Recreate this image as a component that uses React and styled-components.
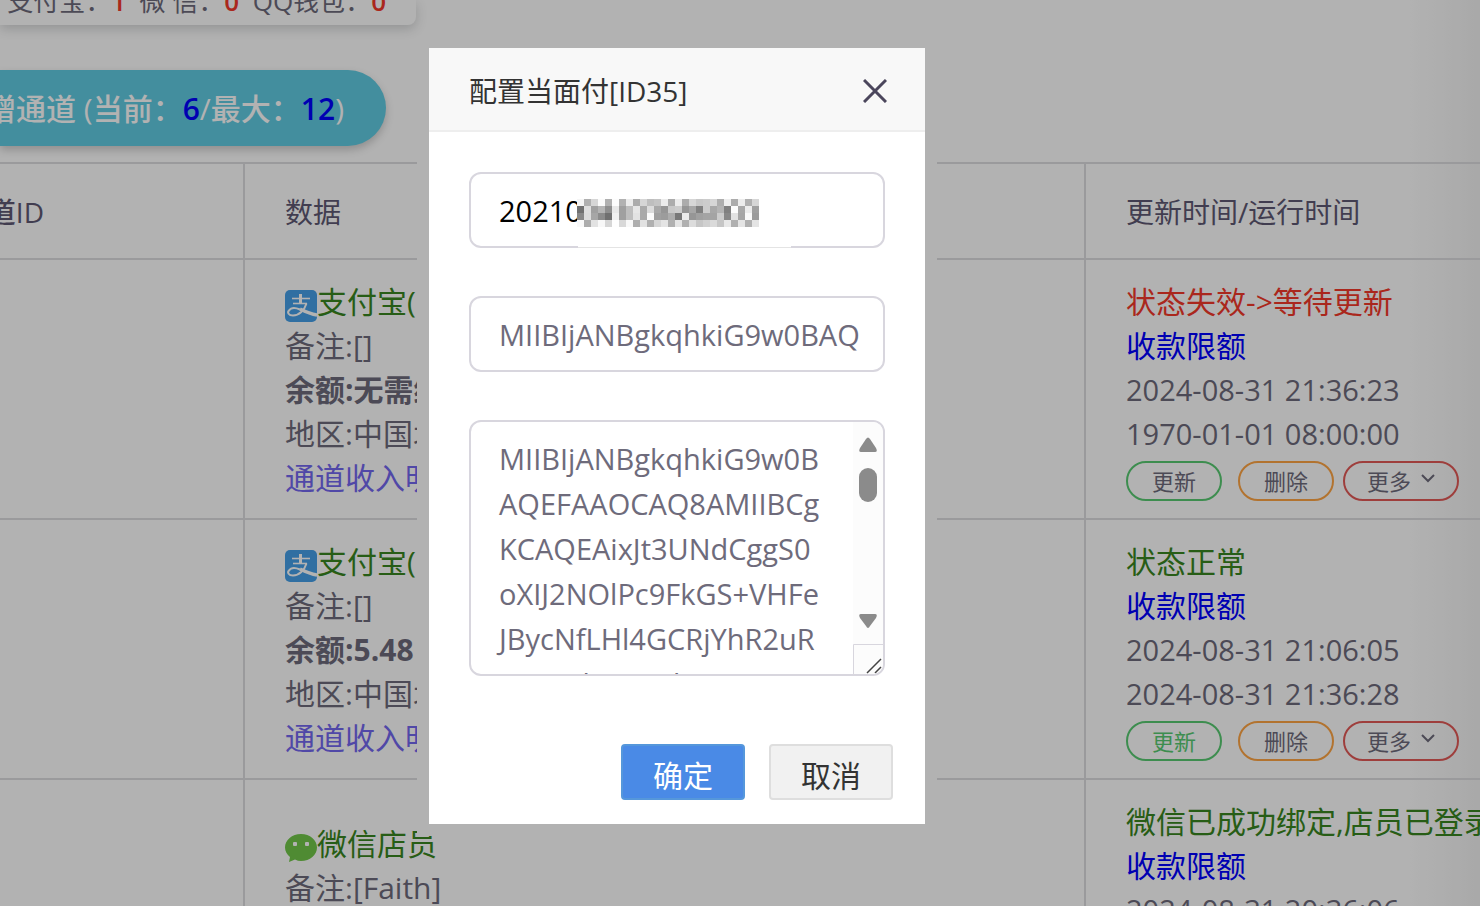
import React, { useState } from 'react';
import styled, { createGlobalStyle } from 'styled-components';

const publicKey = 'MIIBIjANBgkqhkiG9w0BAQ';

const keyLines = [
  'MIIBIjANBgkqhkiG9w0B',
  'AQEFAAOCAQ8AMIIBCg',
  'KCAQEAixJt3UNdCggS0',
  'oXIJ2NOlPc9FkGS+VHFe',
  'JBycNfLHl4GCRjYhR2uR',
  'wgnzshmvqshwi',
];

const channels = [
  {
    id: 35,
    icon: 'alipay',
    name: '支付宝(当面付)',
    remark: '备注:[]',
    balance: '余额:无需维护',
    area: '地区:中国北京',
    status: '状态失效->等待更新',
    failed: true,
    updated: '2024-08-31 21:36:23',
    running: '1970-01-01 08:00:00',
  },
  {
    id: 34,
    icon: 'alipay',
    name: '支付宝(当面付)',
    remark: '备注:[]',
    balance: '余额:5.48',
    area: '地区:中国北京',
    status: '状态正常',
    active: true,
    updated: '2024-08-31 21:06:05',
    running: '2024-08-31 21:36:28',
  },
  {
    id: 33,
    icon: 'wechat',
    name: '微信店员',
    remark: '备注:[Faith]',
    balance: '余额:0.00',
    status: '微信已成功绑定,店员已登录',
    active: true,
    updated: '2024-08-31 20:36:06',
    running: '2024-08-31 21:36:28',
  },
];

// mosaic cells over the hidden part of the app id, 0 = black, 255 = white
const mosaic = [
  [245, 176, 214, 250, 176, 252, 178, 236, 172, 214, 190, 196, 236, 172, 235, 172, 214, 200, 204, 214, 174, 238, 172, 236, 176, 214],
  [112, 222, 160, 180, 142, 232, 160, 190, 230, 170, 220, 168, 150, 200, 204, 150, 166, 128, 204, 168, 180, 128, 252, 168, 236, 160],
  [136, 220, 166, 140, 112, 240, 160, 190, 226, 170, 252, 160, 156, 172, 120, 236, 150, 160, 164, 164, 204, 136, 226, 166, 250, 156],
  [248, 172, 226, 248, 214, 254, 216, 248, 174, 226, 176, 214, 228, 176, 228, 176, 220, 198, 208, 218, 198, 232, 176, 228, 176, 228],
];

const AlipayIcon = () => (
  <Logo viewBox="0 0 32 32" aria-hidden="true">
    <rect width="32" height="32" rx="5" fill="#459fe8" />
    <g fill="none" stroke="#fff">
      <path d="M7 8.500H25" strokeWidth="1.600" />
      <path d="M15.500 4V14" strokeWidth="3" />
      <path d="M8 13.500H22" strokeWidth="1.600" />
      <path
        d="M21.500 13.500C19.500 20 14 25.500 8 25.500C3.500 25.500 2 22.500 4 20.500C6 17.500 10.500 17.500 15 19.500"
        strokeWidth="2"
      />
      <path d="M15 19C20 21.500 25 24 32 25" strokeWidth="3.500" />
    </g>
  </Logo>
);

const WechatIcon = () => (
  <Logo viewBox="0 0 32 32" aria-hidden="true">
    <path
      d="M16 2C7 2 0 8 0 15.500C0 19.500 2 22.500 5 25L4 30L10 27.500C12 28.500 14 29 16 29C25 29 32 23 32 15.500C32 8 25 2 16 2Z"
      fill="#71c84a"
    />
    <rect x="8" y="10" width="4" height="4" rx="1" fill="#fff" />
    <rect x="20" y="10" width="4" height="4" rx="1" fill="#fff" />
  </Logo>
);

const App = () => {
  const [open, setOpen] = useState(true);
  const close = () => setOpen(false);

  return (
    <>
      <GlobalStyle />
      <Page>
        <StatsCard>
          <StatsText>
            今日: 支付宝：<em>1</em>&nbsp; 微 信：<em>0</em>&nbsp; QQ钱包：<em>0</em>
          </StatsText>
        </StatsCard>
        <AddButton type="button">
          <span>
            新增通道 (当前：<b>6</b>/最大：<b>12</b>)
          </span>
        </AddButton>
        <Table>
          <colgroup>
            <IdCol />
            <col />
            <TimeCol />
          </colgroup>
          <thead>
            <tr>
              <IdHead>
                <div>
                  <span>通道ID</span>
                </div>
              </IdHead>
              <th>数据</th>
              <th>更新时间/运行时间</th>
            </tr>
          </thead>
          <tbody>
            {channels.map((item) => (
              <tr key={item.id}>
                <td />
                <td>
                  <Line $color="#388620">
                    {item.icon === 'alipay' ? <AlipayIcon /> : <WechatIcon />}
                    {item.name}
                  </Line>
                  <Line>{item.remark}</Line>
                  <Line $bold>{item.balance}</Line>
                  {item.area && <Line>{item.area}</Line>}
                  <Line>
                    <LineLink href="#income" $color="#7367f0">通道收入明细</LineLink>
                  </Line>
                </td>
                <td>
                  <Line $color={item.failed ? '#f4382a' : '#388620'}>{item.status}</Line>
                  <Line>
                    <LineLink href="#limit" $color="#00f">收款限额</LineLink>
                  </Line>
                  <TimeLine>{item.updated}</TimeLine>
                  <TimeLine>{item.running}</TimeLine>
                  <Actions>
                    <Pill type="button" $border="#58cb72" $color={item.active && '#58cb72'}>更新</Pill>
                    <Pill type="button" $border="#ffa544">删除</Pill>
                    <MorePill type="button" $border="#e35a57">
                      更多
                      <svg width="14" height="14" viewBox="0 0 14 14" fill="none" stroke="currentColor" strokeWidth="2" aria-hidden="true">
                        <path d="M1 2L7 8L13 2" />
                      </svg>
                    </MorePill>
                  </Actions>
                </td>
              </tr>
            ))}
          </tbody>
        </Table>
      </Page>
      {open && (
        <>
          <Mask />
          <DialogFrame>
            <Dialog role="dialog" aria-labelledby="dialog-title">
              <DialogHeader>
                <h2 id="dialog-title">配置当面付[ID35]</h2>
                <CloseButton type="button" aria-label="关闭" onClick={close}>
                  <svg width="24" height="24" viewBox="0 0 24 24" fill="none" stroke="currentColor" strokeWidth="3" aria-hidden="true">
                    <path d="M1 1L23 23M23 1L1 23" />
                  </svg>
                </CloseButton>
              </DialogHeader>
              <DialogBody>
                <Field>
                  <TextInput aria-label="应用ID" defaultValue="20210" $dark />
                  <Mosaic viewBox="0 0 26 4" preserveAspectRatio="none" shapeRendering="crispEdges" aria-hidden="true">
                    {mosaic.map((row, y) =>
                      row.map((v, x) => (
                        <rect key={`${x}-${y}`} x={x} y={y} width="1" height="1" fill={`rgb(${v},${v},${v})`} />
                      ))
                    )}
                  </Mosaic>
                  <Erased />
                </Field>
                <Field>
                  <TextInput aria-label="支付宝公钥" defaultValue={publicKey} />
                </Field>
                <Field>
                  <KeyArea aria-label="应用私钥" defaultValue={keyLines.join('\n')} />
                  <ScrollTrack viewBox="0 0 30 252" aria-hidden="true">
                    <rect width="30" height="252" fill="#fcfcfc" />
                    <path d="M13 17Q15 14 17 17L23 26Q25 30 22 30H8Q5 30 7 26Z" fill="#8b8b8b" />
                    <rect x="6" y="46" width="18" height="34" rx="9" fill="#8b8b8b" />
                    <path d="M13 204Q15 208 17 204L23 196Q25 192 22 192H8Q5 192 7 196Z" fill="#8b8b8b" />
                    <path d="M0.500 252V222.500H30" fill="none" stroke="#d8d6de" />
                    <path d="M14 251L28 237M22 251L28 245" fill="none" stroke="#444" strokeWidth="1.500" />
                  </ScrollTrack>
                </Field>
              </DialogBody>
              <DialogFooter>
                <FooterButton type="button" $primary onClick={close}>确定</FooterButton>
                <FooterButton type="button" onClick={close}>取消</FooterButton>
              </DialogFooter>
            </Dialog>
          </DialogFrame>
        </>
      )}
    </>
  );
};

const GlobalStyle = createGlobalStyle`
  * {
    box-sizing: border-box;
  }

  body {
    margin: 0;
    background: #fff;
    color: #6e6b7b;
    font-family: "Open Sans", "Noto Sans CJK SC", sans-serif;
    font-size: 30px;
    line-height: 44px;
  }

  button, input, textarea {
    font-family: inherit;
  }
`;

const Page = styled.main`
  height: 100vh;
  overflow: hidden;
  background: linear-gradient(to right, #fff calc(100% - 70px), #f2f2f2);
`;

const StatsCard = styled.div`
  width: 416px;
  height: 25px;
  padding: 0 30px 6px 0;
  display: flex;
  justify-content: flex-end;
  align-items: flex-end;
  border-radius: 0 0 8px 0;
  box-shadow: 0 4px 12px rgba(34, 41, 47, 0.2);
`;

const StatsText = styled.div`
  flex: none;
  font-size: 26px;
  line-height: 36px;
  white-space: nowrap;

  em {
    color: #f4382a;
    font-style: normal;
    font-weight: 600;
  }
`;

const AddButton = styled.button`
  width: 386px;
  height: 76px;
  margin: 45px 0 16px;
  padding: 0 42px 2px 0;
  display: flex;
  justify-content: flex-end;
  align-items: center;
  border: 0;
  border-radius: 0 38px 38px 0;
  background: #60cce3;
  box-shadow: 0 4px 8px rgba(0, 0, 0, 0.2);
  color: #fff;
  font-size: 30px;
  font-weight: 500;
  white-space: nowrap;
  cursor: pointer;

  span {
    flex: none;
  }

  b {
    color: #00f;
    font-weight: 600;
  }
`;

const Table = styled.table`
  width: 100%;
  table-layout: fixed;
  border-collapse: separate;
  border-spacing: 0;
  border-top: 2px solid #dddde0;

  th, td {
    padding: 20px 0 18px 40px;
    border-bottom: 2px solid #dddde0;
    border-right: 2px solid #dddde0;
    text-align: left;
    vertical-align: middle;
    white-space: nowrap;
  }

  th {
    height: 96px;
    color: #5e5873;
    font-size: 28px;
    font-weight: 400;
  }

  th:last-child, td:last-child {
    border-right: 0;
  }
`;

const IdCol = styled.col`
  width: 245px;
`;

const TimeCol = styled.col`
  width: 394px;
`;

const IdHead = styled.th`
  && {
    padding-left: 0;
    font-weight: 500;
  }

  div {
    width: 44px;
    display: flex;
    justify-content: flex-end;
  }

  span {
    flex: none;
  }
`;

const Line = styled.div`
  height: 44px;
  display: flex;
  align-items: center;
  color: ${(props) => props.$color || 'inherit'};
  font-weight: ${(props) => (props.$bold ? 700 : 400)};
`;

const TimeLine = styled(Line)`
  font-size: 29px;
`;

const LineLink = styled.a`
  color: ${(props) => props.$color};
  text-decoration: none;
`;

const Logo = styled.svg`
  width: 32px;
  height: 32px;
  margin-top: 8px;
  flex: none;
`;

const Actions = styled.div`
  height: 44px;
  padding-top: 5px;
  display: flex;
  align-items: center;
`;

const Pill = styled.button`
  width: 96px;
  height: 40px;
  margin-right: 16px;
  padding: 0 0 2px;
  display: flex;
  justify-content: center;
  align-items: center;
  border: 2px solid ${(props) => props.$border};
  border-radius: 20px;
  background: transparent;
  color: ${(props) => props.$color || '#6e6b7b'};
  font-size: 22px;
  cursor: pointer;
`;

const MorePill = styled(Pill)`
  width: 116px;
  margin: 0 0 0 -7px;
  gap: 10px;
`;

const Mask = styled.div`
  position: fixed;
  inset: 0;
  background: rgba(0, 0, 0, 0.3);
`;

const DialogFrame = styled.div`
  position: fixed;
  top: 36px;
  left: 417px;
  width: 520px;
  padding: 12px;
  background: #b2b2b2;
`;

const Dialog = styled.section`
  background: #fff;
`;

const DialogHeader = styled.header`
  height: 84px;
  padding: 4px 38px 0 40px;
  display: flex;
  justify-content: space-between;
  align-items: center;
  border-bottom: 2px solid #eee;
  background: #f8f8f8;

  h2 {
    margin: 0;
    color: #333;
    font-size: 28px;
    font-weight: 400;
  }
`;

const CloseButton = styled.button`
  padding: 0;
  display: flex;
  border: 0;
  background: none;
  color: #4b465c;
  cursor: pointer;
`;

const DialogBody = styled.div`
  padding: 40px;
  display: flex;
  flex-direction: column;
  gap: 48px;
`;

const Field = styled.div`
  position: relative;
  display: flex;
`;

const TextInput = styled.input`
  width: 100%;
  height: 76px;
  padding: 0 20px 0 28px;
  border: 2px solid #d8d6de;
  border-radius: 12px;
  outline: 0;
  background: #fff;
  color: ${(props) => (props.$dark ? '#000' : '#6e6b7b')};
  font-size: 29px;
`;

const Mosaic = styled.svg`
  position: absolute;
  top: 27px;
  left: 108px;
  width: 182px;
  height: 28px;
`;

const Erased = styled.span`
  position: absolute;
  bottom: 0;
  left: 109px;
  width: 213px;
  height: 2px;
  border-bottom: 1px solid #e4e4e4;
  background: #fff;
`;

const KeyArea = styled.textarea`
  width: 100%;
  height: 256px;
  padding: 14px 30px 14px 28px;
  border: 2px solid #d8d6de;
  border-radius: 12px;
  outline: 0;
  overflow: hidden;
  resize: none;
  background: #fff;
  color: #6e6b7b;
  font-size: 29px;
  line-height: 45px;
  white-space: pre;
`;

const ScrollTrack = styled.svg`
  position: absolute;
  top: 2px;
  right: 2px;
  width: 30px;
  height: 252px;
  border-radius: 0 10px 10px 0;
`;

const DialogFooter = styled.footer`
  padding: 28px 32px 24px;
  display: flex;
  justify-content: flex-end;
  gap: 24px;
`;

const FooterButton = styled.button`
  width: 124px;
  height: 56px;
  padding: 4px 0 0;
  border: 2px solid ${(props) => (props.$primary ? '#5597db' : '#dedede')};
  border-radius: 4px;
  background: ${(props) => (props.$primary ? '#4a8ae6' : '#f1f1f1')};
  color: ${(props) => (props.$primary ? '#fff' : '#333')};
  font-size: 30px;
  cursor: pointer;
`;

export default App;
